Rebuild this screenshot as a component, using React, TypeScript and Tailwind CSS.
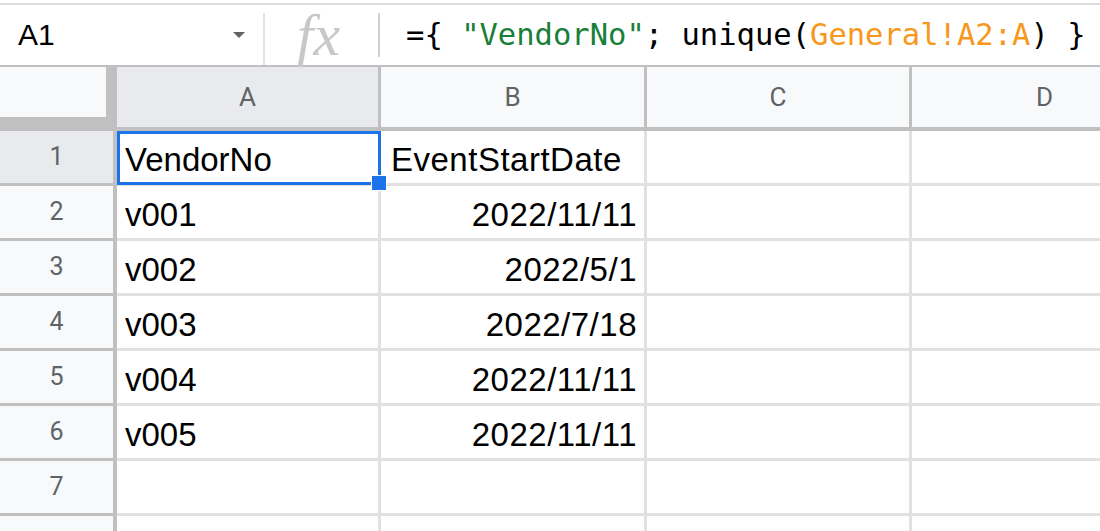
import React from "react";

const columns = [
  { letter: "A", width: "w-[264px]" },
  { letter: "B", width: "w-[266px]" },
  { letter: "C", width: "w-[265px]" },
];

// 表格数据：第一行是标题，其余为日期（右对齐）
const rows: [string, string][] = [
  ["VendorNo", "EventStartDate"],
  ["v001", "2022/11/11"],
  ["v002", "2022/5/1"],
  ["v003", "2022/7/18"],
  ["v004", "2022/11/11"],
  ["v005", "2022/11/11"],
  ["", ""],
  ["", ""],
];

function FormulaBar() {
  return (
    <div className="flex h-[60px] items-stretch">
      <div className="flex w-[263px] items-center justify-between pl-[18px] pr-[18px]">
        <span className="text-[30px] leading-none text-black">A1</span>
        <span className="h-0 w-0 border-x-[6px] border-t-[6px] border-x-transparent border-t-[#5f6368]" />
      </div>
      <div className="mt-[8px] w-[2px] bg-[#e3e3e3]" />
      <div className="flex w-[113px] items-center justify-center">
        <span className="pr-[6px] font-['Liberation_Serif',serif] text-[60px] leading-none italic text-[#c8c8c8]">fx</span>
      </div>
      <div className="my-[8px] w-[2px] bg-[#d0d0d0]" />
      <div className="flex items-center pl-[26px] font-['DejaVu_Sans_Mono',monospace] text-[30.5px] leading-none text-black">
        <span className="whitespace-pre">
          ={"{"} <span className="text-[#188038]">"VendorNo"</span>; unique(
          <span className="text-[#f7981d]">General!A2:A</span>) {"}"}
        </span>
      </div>
    </div>
  );
}

function HeaderRow() {
  return (
    <div className="flex h-[64px]">
      <div className="h-[64px] w-[117px] shrink-0 bg-[#c0c0c0]">
        <div className="h-[50px] w-[106px] bg-[#f8f9fa]" />
      </div>
      {columns.map((c, i) => (
        <div
          key={c.letter}
          className={`${c.width} flex h-[64px] shrink-0 items-center justify-center border-r-[3px] border-b-[4px] border-[#c0c0c0] font-['Roboto',sans-serif] text-[26px] text-[#5f6368] ${
            i === 0 ? "bg-[#e8eaed]" : "bg-[#f8f9fa]"
          }`}
        >
          {c.letter}
        </div>
      ))}
      <div className="flex h-[64px] w-[265px] shrink-0 items-center justify-center border-b-[4px] border-[#c0c0c0] bg-[#f8f9fa] font-['Roboto',sans-serif] text-[26px] text-[#5f6368]">
        D
      </div>
    </div>
  );
}

export default function App() {
  return (
    <div className="relative h-[531px] w-[1100px] overflow-hidden bg-white font-['Liberation_Sans',Arial,sans-serif]">
      <div className="h-[3px]" />
      <div className="h-[2px] bg-[#dadce0]" />
      <FormulaBar />
      <div className="h-[2px] bg-[#c0c0c0]" />
      <HeaderRow />

      {rows.map((r, i) => (
        <div key={i} className="flex h-[55px]">
          <div
            className={`flex w-[113px] shrink-0 items-center justify-center border-b-[3px] border-[#c0c0c0] font-['Roboto',sans-serif] text-[25px] text-[#5f6368] ${
              i === 0 ? "bg-[#e8eaed]" : "bg-[#f8f9fa]"
            }`}
          >
            {i + 1}
          </div>
          <div className="w-[4px] shrink-0 bg-[#c0c0c0]" />
          <div className="flex w-[264px] shrink-0 items-end border-r-[3px] border-b-[3px] border-[#e1e1e1] pb-[7px] pl-[8px] text-[33px] leading-none text-black">
            {r[0]}
          </div>
          <div
            className={`flex w-[266px] shrink-0 items-end border-r-[3px] border-b-[3px] border-[#e1e1e1] pb-[7px] text-[33px] leading-none tracking-[0.5px] text-black ${
              i === 0 ? "justify-start pl-[10px]" : "justify-end pr-[7px]"
            }`}
          >
            {r[1]}
          </div>
          <div className="w-[265px] shrink-0 border-r-[3px] border-b-[3px] border-[#e1e1e1]" />
          <div className="w-[265px] shrink-0 border-b-[3px] border-[#e1e1e1]" />
        </div>
      ))}

      {/* 选中框 A1 */}
      <div className="absolute top-[131px] left-[117px] h-[54px] w-[264px] border-[3px] border-[#1a73e8]" />
      <div className="absolute top-[175px] left-[371px] h-[16px] w-[16px] border border-white bg-[#1a73e8]" />
    </div>
  );
}
